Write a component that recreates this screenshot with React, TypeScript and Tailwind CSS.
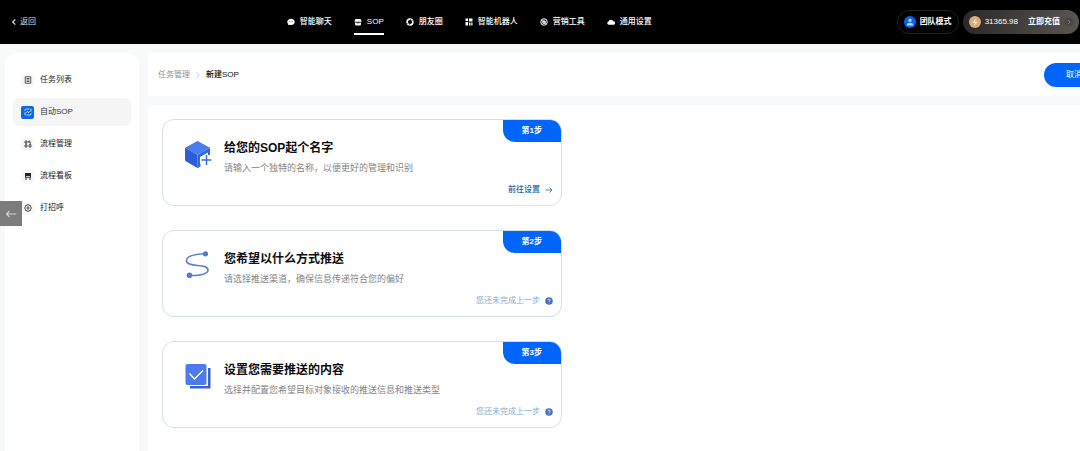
import type { ReactNode } from "react";

const ChatIcon = () => (
  <svg viewBox="0 0 16 16" className="size-2" aria-hidden="true">
    <path d="M8 1.500c4.200 0 7.500 2.700 7.500 6.300S12.200 14 8 14c-1 0-1.900-.1-2.700-.4L2 14.500l.6-2.600C1.300 10.800.5 9.400.5 7.800.5 4.200 3.800 1.500 8 1.500z" fill="currentColor" />
    <path d="M4.200 7.200h1.600v1H4.200zM7.200 7.200h1.600v1H7.200zM10.200 7.200h1.600v1h-1.600z" fill="#000" />
  </svg>
);

const SopIcon = () => (
  <svg viewBox="0 0 16 16" className="size-2" aria-hidden="true">
    <path d="M3 2h10l2 4v1.500H1V6z" fill="currentColor" />
    <path d="M2 9h12v3a3 3 0 0 1-3 3H5a3 3 0 0 1-3-3z" fill="currentColor" />
    <path d="M5 9h6v1.500H5z" fill="#000" />
  </svg>
);

const MomentsIcon = () => (
  <svg viewBox="0 0 16 16" className="size-2" fill="none" aria-hidden="true">
    <circle cx="8" cy="8" r="5.800" stroke="currentColor" strokeWidth="3.200" />
    <path d="M10.500 1L8 4.500M5.500 15L8 11.500M1 10.500L4.500 12M15 5.500L11.500 4" stroke="#000" strokeWidth="1" />
  </svg>
);

const RobotIcon = () => (
  <svg viewBox="0 0 16 16" className="size-2" fill="currentColor" aria-hidden="true">
    <path d="M1 1h5v5H1zM8 1h7v6H8zM1 8h5v7H1zM8 9h3v6H8zM12.500 9H15v6h-2.500z" />
  </svg>
);

const MarketingIcon = () => (
  <svg viewBox="0 0 16 16" className="size-2" fill="none" stroke="currentColor" aria-hidden="true">
    <circle cx="8" cy="8" r="6.500" strokeWidth="2" />
    <circle cx="8" cy="8" r="2.500" strokeWidth="2.500" />
    <path d="M3 4l10 8" strokeWidth="1.500" />
  </svg>
);

const CloudIcon = () => (
  <svg viewBox="0 0 16 16" className="size-2" fill="currentColor" aria-hidden="true">
    <path d="M3.500 13.500a3.300 3.300 0 0 1-.4-6.500A5 5 0 0 1 12.600 6.500a3.500 3.500 0 0 1 .2 7z" />
  </svg>
);

const ListIcon = () => (
  <svg viewBox="0 0 16 16" className="size-2" fill="none" stroke="currentColor" strokeWidth="1.500" aria-hidden="true">
    <path d="M2.500 1.500h11v13h-11zM5 5h6M5 8h6M5 11h6" />
  </svg>
);

const AutoIcon = () => (
  <svg viewBox="0 0 16 16" className="size-2" fill="none" stroke="currentColor" strokeWidth="1.400" aria-hidden="true">
    <path d="M2 6V4.500A2.500 2.500 0 0 1 4.500 2H11M14 10v1.500a2.500 2.500 0 0 1-2.500 2.500H5M2 8.500V14h1M14 7.500V2h-1M5 9.500l2-3 2 3 2-3" />
  </svg>
);

const FlowIcon = () => (
  <svg viewBox="0 0 16 16" className="size-2" fill="none" stroke="currentColor" strokeWidth="1.500" aria-hidden="true">
    <path d="M2 2h4v4H2zM2 10h4v4H2zM10 9.500h4V14h-4zM4 6v4M9 3.500h3.500V9" />
    <path d="M11 1L8.500 3.500 11 6" />
  </svg>
);

const BoardIcon = () => (
  <svg viewBox="0 0 16 16" className="size-2" aria-hidden="true">
    <path d="M2 2h12v9.500H2zM2 13h4v2H2zM10 13h4v2h-4z" fill="currentColor" />
    <path d="M4 8h8v1.500H4z" fill="#fff" />
  </svg>
);

const HelloIcon = () => (
  <svg viewBox="0 0 16 16" className="size-2" fill="none" stroke="currentColor" strokeWidth="1.700" aria-hidden="true">
    <path d="M8 1l2 1.500 2.600.3.600 2.600L15 8l-1.800 2.600-.6 2.600-2.600.3L8 15l-2-1.500-2.600-.3-.6-2.600L1 8l1.800-2.600.6-2.600L6 2.500z" />
    <path d="M5 6.500h6M5 9.500h6M8 5v6" strokeWidth="1.200" />
  </svg>
);

const CubeIcon = () => (
  <svg viewBox="0 0 28 28" className="size-7" aria-hidden="true">
    <path d="M13.500 1L26 7.800 13.500 14.800 1 7.800z" fill="#4a7df0" />
    <path d="M1 7.800l12.500 7V28L2.200 21.600A2.400 2.400 0 0 1 1 19.500z" fill="#2a5fd8" />
    <path d="M13.500 14.800L26 7.800V15h-2V12.500l-8 4.500v9.500L13.500 28z" fill="#3566dd" />
    <path d="M13.500 28v-2.500l3-1.500v2.500z" fill="#3566dd" />
    <path d="M22.500 15v10M17.500 20h10" stroke="#3f6fd8" strokeWidth="1.500" />
  </svg>
);

const RouteIcon = () => (
  <svg viewBox="0 0 28 28" className="size-7" fill="none" aria-hidden="true">
    <path d="M20 2.800C8 3.500 2.500 5.500 2.500 9.500c0 8 21.500 2 21.500 9.500 0 4-6 5.500-18 5.500" stroke="#5d83cc" strokeWidth="1.600" />
    <circle cx="21.500" cy="2.900" r="2.600" fill="#4f7bd3" />
    <circle cx="5.500" cy="24.300" r="2.800" fill="#4f7bd3" />
  </svg>
);

const CheckIcon = () => (
  <svg viewBox="0 0 28 28" className="size-7" fill="none" aria-hidden="true">
    <path d="M24 6h2.500v20.500H6V24h18z" fill="#3c62c0" />
    <rect x="1.500" y="2" width="21" height="21" rx="2" fill="#4b7bef" />
    <path d="M5.500 11.500l5 5.500 8.500-8.500" stroke="#fff" strokeWidth="1.400" />
  </svg>
);

const navItems = [
  { label: "智能聊天", icon: <ChatIcon /> },
  { label: "SOP", icon: <SopIcon />, active: true },
  { label: "朋友圈", icon: <MomentsIcon /> },
  { label: "智能机器人", icon: <RobotIcon /> },
  { label: "营销工具", icon: <MarketingIcon /> },
  { label: "通用设置", icon: <CloudIcon /> },
];

const menuItems = [
  { label: "任务列表", icon: <ListIcon /> },
  { label: "自动SOP", icon: <AutoIcon />, active: true },
  { label: "流程管理", icon: <FlowIcon /> },
  { label: "流程看板", icon: <BoardIcon /> },
  { label: "打招呼", icon: <HelloIcon /> },
];

type StepProps = {
  step: string;
  title: string;
  desc: string;
  icon: ReactNode;
  ready?: boolean;
};

const steps: StepProps[] = [
  { step: "第1步", title: "给您的SOP起个名字", desc: "请输入一个独特的名称，以便更好的管理和识别", icon: <CubeIcon />, ready: true },
  { step: "第2步", title: "您希望以什么方式推送", desc: "请选择推送渠道，确保信息传递符合您的偏好", icon: <RouteIcon /> },
  { step: "第3步", title: "设置您需要推送的内容", desc: "选择并配置您希望目标对象接收的推送信息和推送类型", icon: <CheckIcon /> },
];

const StepCard = ({ step, title, desc, icon, ready }: StepProps) => (
  <li className="relative flex flex-col justify-between rounded-xl border border-[#d5e0e6] bg-white pt-5 pb-[9px] pl-[21px]">
    <span className="absolute top-0 right-0 rounded-tr-[11px] rounded-bl-xl bg-[#0066fb] px-[19px] py-[3px] text-[8px] leading-4 font-bold text-white">
      {step}
    </span>
    <div className="flex items-start gap-3">
      {icon}
      <div>
        <h2 className="text-xs leading-4 font-bold text-[#0c0c0c]">{title}</h2>
        <p className="mt-1 text-[9px] leading-4 text-[#858585]">{desc}</p>
      </div>
    </div>
    <div className="mt-2 flex justify-end pr-2 text-[8px] leading-3">
      {ready ? (
        <a href="#" className="flex items-center gap-[5px] font-medium text-[#1763a8]">
          前往设置
          <svg viewBox="0 0 16 16" className="size-2" fill="none" stroke="currentColor" strokeWidth="1.500" aria-hidden="true">
            <path d="M1 8h13M9 3l5 5-5 5" />
          </svg>
        </a>
      ) : (
        <p className="flex items-center gap-[5px] text-[#7fabd2]">
          您还未完成上一步
          <svg viewBox="0 0 16 16" className="size-2" aria-hidden="true">
            <circle cx="8" cy="8" r="7.500" fill="#4470bd" />
            <path d="M5.800 6.300a2.200 2.200 0 1 1 3.300 1.900c-.8.5-1.100.8-1.100 1.600M8 11.200v1.400" stroke="#fff" strokeWidth="1.500" fill="none" />
          </svg>
        </p>
      )}
    </div>
  </li>
);

export default function App() {
  return (
    <div className="flex min-h-screen flex-col overflow-hidden bg-[#f7f9fb] font-['Liberation_Sans','Noto_Sans_CJK_SC',sans-serif] text-[8px] leading-3">
      <header className="flex h-11 items-center justify-between bg-black pr-px pl-3 text-white">
        <a href="#" className="flex w-[30px] items-center gap-1 whitespace-nowrap text-[#dcdcdc]">
          <svg viewBox="0 0 6 10" className="h-2 w-1" fill="none" stroke="currentColor" strokeWidth="1.800" aria-hidden="true">
            <path d="M5 1L1 5l4 4" />
          </svg>
          返回
        </a>
        <nav className="flex gap-[22px]">
          {navItems.map((item) => (
            <a
              key={item.label}
              href="#"
              className={
                item.active
                  ? "flex items-center gap-[5px] border-y-2 border-t-transparent border-b-white py-[5px]"
                  : "flex items-center gap-[5px] border-y-2 border-transparent py-[5px] font-medium"
              }
            >
              {item.icon}
              {item.label}
            </a>
          ))}
        </nav>
        <div className="flex items-center gap-1">
          <button className="flex h-6 items-center gap-1 rounded-full border border-[#242424] px-[6px] font-bold">
            <svg viewBox="0 0 16 16" className="size-3" aria-hidden="true">
              <circle cx="8" cy="8" r="8" fill="#0b62ea" />
              <path d="M8 3.500a2.300 2.300 0 1 1 0 4.600 2.300 2.300 0 0 1 0-4.600zM3.500 12.500c.5-2.500 2-3.500 4.500-3.500s4 1 4.500 3.500z" fill="#b9d6ff" />
            </svg>
            团队模式
          </button>
          <div className="flex h-6 items-center rounded-full bg-linear-to-r from-[#2b2927] to-[#5a5551] pr-1 pl-[6px]">
            <svg viewBox="0 0 16 16" className="mr-1 size-3" aria-hidden="true">
              <circle cx="8" cy="8" r="8" fill="#d9ad79" />
              <path d="M9 3.500L4.500 9H8l-1 4 4.500-5.500H8z" fill="#fff3dc" />
            </svg>
            <span>31365.98</span>
            <button className="ml-[10px] flex items-center gap-[3px] font-bold">
              立即充值
              <svg viewBox="0 0 16 16" className="size-3" fill="none" aria-hidden="true">
                <circle cx="8" cy="8" r="6" fill="#4a4642" />
                <path d="M7 5.500L9.500 8 7 10.500" stroke="#8d8782" strokeWidth="1.200" />
              </svg>
            </button>
          </div>
        </div>
      </header>

      <div className="relative flex flex-1 gap-[9px] pt-[9px] pl-[5px]">
        <aside className="w-[134px] shrink-0 rounded-t-xl bg-white px-2 pt-[13px]">
          <ul className="flex flex-col gap-1">
            {menuItems.map((item) => (
              <li key={item.label}>
                <a
                  href="#"
                  className={
                    item.active
                      ? "flex h-7 items-center gap-[6px] rounded-md bg-[#f5f5f5] px-2 text-[#333333]"
                      : "flex h-7 items-center gap-[6px] px-2 text-[#222222]"
                  }
                >
                  <span
                    className={
                      item.active
                        ? "flex size-[13px] items-center justify-center rounded-xs bg-[#0b68ea] text-white"
                        : "flex size-[13px] items-center justify-center rounded-xs bg-[#f7f7f7]"
                    }
                  >
                    {item.icon}
                  </span>
                  {item.label}
                </a>
              </li>
            ))}
          </ul>
        </aside>

        <button aria-label="收起" className="absolute top-[157px] left-0 flex h-[25px] w-[22px] items-center justify-center bg-[#7c7c7c] text-[#d0d0d0]">
          <svg viewBox="0 0 16 16" className="size-3" fill="none" stroke="currentColor" strokeWidth="1.500" aria-hidden="true">
            <path d="M15 8H2M6 4L2 8l4 4" />
          </svg>
        </button>

        <main className="flex min-w-0 flex-1 flex-col gap-[9px]">
          <div className="flex h-[43px] items-center justify-between bg-white pl-[10px]">
            <nav className="flex items-center gap-[6px]">
              <a href="#" className="text-[#8f8f8f]">任务管理</a>
              <svg viewBox="0 0 6 10" className="h-[6px] w-1" fill="none" stroke="#b5b5b5" strokeWidth="1.200" aria-hidden="true">
                <path d="M1 1l4 4-4 4" />
              </svg>
              <span className="font-medium text-[#111111]">新建SOP</span>
            </nav>
            <button className="-mr-6 h-6 shrink-0 rounded-full bg-[#0066fb] px-[22px] text-white">取消</button>
          </div>
          <section className="flex-1 bg-white px-[14px] pt-[14px] pb-5">
            <ul className="flex max-w-[400px] flex-col gap-6">
              {steps.map((s) => (
                <StepCard key={s.step} {...s} />
              ))}
            </ul>
          </section>
        </main>
      </div>
    </div>
  );
}
